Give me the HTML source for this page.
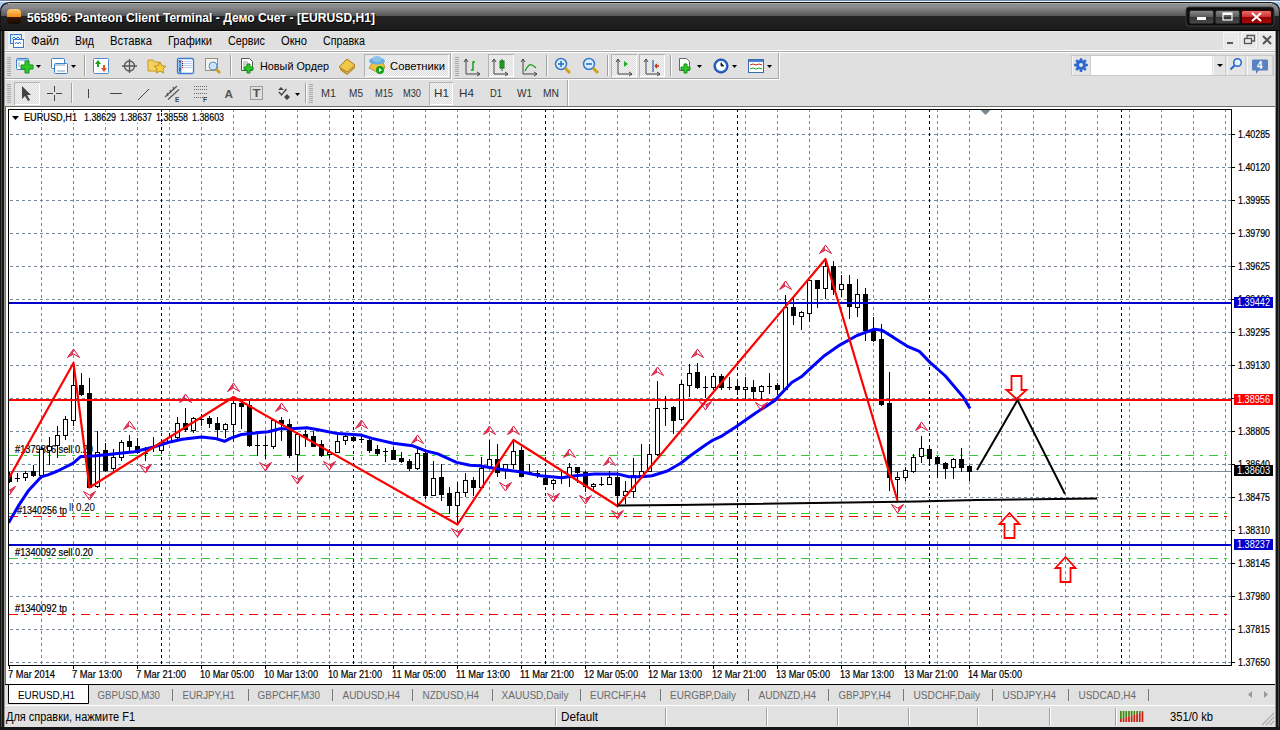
<!DOCTYPE html><html><head><meta charset="utf-8"><style>html,body{margin:0;padding:0;width:1280px;height:730px;overflow:hidden;background:#fff}svg{display:block}</style></head><body><svg width="1280" height="730" viewBox="0 0 1280 730" font-family="Liberation Sans"><rect x="0" y="0" width="1280" height="730" fill="#a8c8ec" /><rect x="0" y="0" width="1280" height="1" fill="#7088a8" /><rect x="0" y="1" width="1280" height="1" fill="#f0f4fa" /><path d="M0,12 Q0,2 10,2 L1270,2 Q1280,2 1280,12 L1280,730 L0,730 Z" fill="#161616"/><defs><linearGradient id="tg" x1="0" y1="0" x2="0" y2="1"><stop offset="0" stop-color="#8e8f92"/><stop offset="0.15" stop-color="#8a8b8e"/><stop offset="0.48" stop-color="#575757"/><stop offset="0.5" stop-color="#232324"/><stop offset="1" stop-color="#1b1b1c"/></linearGradient><linearGradient id="wbg" x1="0" y1="0" x2="0" y2="1"><stop offset="0" stop-color="#8a8a8a"/><stop offset="0.5" stop-color="#5a5a5a"/><stop offset="0.52" stop-color="#363636"/><stop offset="1" stop-color="#4a4a4a"/></linearGradient><linearGradient id="wbr" x1="0" y1="0" x2="0" y2="1"><stop offset="0" stop-color="#f07070"/><stop offset="0.5" stop-color="#c83030"/><stop offset="0.52" stop-color="#900000"/><stop offset="1" stop-color="#a80808"/></linearGradient><linearGradient id="ico" x1="0" y1="0" x2="0" y2="1"><stop offset="0" stop-color="#ffc870"/><stop offset="0.55" stop-color="#f08a10"/><stop offset="0.56" stop-color="#3a1800"/><stop offset="1" stop-color="#120800"/></linearGradient><pattern id="chk" width="2" height="2" patternUnits="userSpaceOnUse"><rect width="2" height="2" fill="#f4f4f4"/><rect width="1" height="1" fill="#dcdcdc"/><rect x="1" y="1" width="1" height="1" fill="#dcdcdc"/></pattern><clipPath id="cc"><rect x="9" y="110" width="1222" height="555"/></clipPath></defs><path d="M1,13 Q1,3 11,3 L1269,3 Q1279,3 1279,13 L1279,30 L1,30 Z" fill="url(#tg)"/><rect x="8" y="3" width="1264" height="1" fill="#a8a8a8" /><rect x="7" y="9" width="14" height="15" rx="4" fill="url(#ico)"/><text x="28" y="22.5" font-size="13.5" fill="#000" textLength="348" lengthAdjust="spacingAndGlyphs" font-weight="bold" >565896: Panteon Client Terminal - Демо Счет - [EURUSD,H1]</text><text x="27" y="21.5" font-size="13.5" fill="#fff" textLength="348" lengthAdjust="spacingAndGlyphs" font-weight="bold" >565896: Panteon Client Terminal - Демо Счет - [EURUSD,H1]</text><rect x="1186" y="7" width="88" height="19" rx="3" fill="#0e0e0e" stroke="#3c3c3c"/><rect x="1189.5" y="10.5" width="24" height="13" rx="2" fill="url(#wbg)" stroke="#2a2a2a"/><rect x="1197" y="17" width="9" height="3" fill="#fff" /><rect x="1215.5" y="10.5" width="24" height="13" rx="2" fill="url(#wbg)" stroke="#2a2a2a"/><rect x="1223" y="13" width="9" height="7" fill="none" stroke="#fff" stroke-width="1.2"/><rect x="1223" y="13" width="9" height="2" fill="#fff" /><rect x="1241.5" y="10.5" width="30" height="13" rx="2" fill="url(#wbr)" stroke="#3a0000"/><path d="M1252,13 L1261,21 M1261,13 L1252,21" stroke="#fff" stroke-width="2"/><rect x="0" y="30" width="1280" height="1" fill="#000000" /><rect x="4" y="31" width="1272" height="19" fill="#e0e0e0" /><rect x="4" y="31" width="1272" height="1" fill="#ececec" /><rect x="4" y="50" width="1272" height="1" fill="#ffffff" /><rect x="4" y="51" width="1272" height="1" fill="#a8a8a8" /><rect x="4" y="52" width="1272" height="1" fill="#ffffff" /><rect x="8" y="32" width="17" height="17" fill="#f0f0f0"/><rect x="10.5" y="34.5" width="11" height="9" fill="#dfeefc" stroke="#3a78d8"/><path d="M12,39 l2,-2 2,2 2,-2 2,2" stroke="#3a78d8" fill="none"/><rect x="13.5" y="39.5" width="10" height="8" fill="#fff" stroke="#3a78d8"/><path d="M15,44 l1.5,-2 1.5,2 1.5,-2 1.5,2" stroke="#3a78d8" fill="none"/><text x="31" y="45" font-size="12" fill="#000" textLength="28" lengthAdjust="spacingAndGlyphs" >Файл</text><text x="75" y="45" font-size="12" fill="#000" textLength="19" lengthAdjust="spacingAndGlyphs" >Вид</text><text x="110" y="45" font-size="12" fill="#000" textLength="42" lengthAdjust="spacingAndGlyphs" >Вставка</text><text x="168" y="45" font-size="12" fill="#000" textLength="44" lengthAdjust="spacingAndGlyphs" >Графики</text><text x="228" y="45" font-size="12" fill="#000" textLength="37" lengthAdjust="spacingAndGlyphs" >Сервис</text><text x="281" y="45" font-size="12" fill="#000" textLength="26" lengthAdjust="spacingAndGlyphs" >Окно</text><text x="323" y="45" font-size="12" fill="#000" textLength="42" lengthAdjust="spacingAndGlyphs" >Справка</text><rect x="1223.5" y="32.5" width="15" height="16" fill="#e9e9e9" stroke="#f4f4f4"/><rect x="1241.5" y="32.5" width="15" height="16" fill="#e9e9e9" stroke="#f4f4f4"/><rect x="1259.5" y="32.5" width="15" height="16" fill="#e9e9e9" stroke="#f4f4f4"/><rect x="1227" y="42" width="6" height="2" fill="#555" /><rect x="1244.5" y="38.5" width="7" height="5" fill="none" stroke="#555" stroke-width="1.3"/><path d="M1247,38 V35.5 H1254.5 V41 H1252" fill="none" stroke="#555" stroke-width="1.3"/><path d="M1263,36 L1271,44 M1271,36 L1263,44" stroke="#555" stroke-width="2"/><rect x="4" y="53" width="1272" height="53" fill="#e0e0e0" /><rect x="4" y="78" width="447" height="1" fill="#a8a8a8" /><rect x="4" y="79" width="448" height="1" fill="#ffffff" /><rect x="450" y="53" width="1" height="26" fill="#a8a8a8" /><rect x="451" y="53" width="1" height="27" fill="#ffffff" /><rect x="454" y="78" width="325" height="1" fill="#a8a8a8" /><rect x="454" y="79" width="326" height="1" fill="#ffffff" /><rect x="778" y="53" width="1" height="26" fill="#a8a8a8" /><rect x="779" y="53" width="1" height="27" fill="#ffffff" /><rect x="567" y="80" width="1" height="26" fill="#a8a8a8" /><rect x="568" y="80" width="1" height="26" fill="#ffffff" /><rect x="7" y="57" width="4" height="1" fill="#a8a8a8" /><rect x="7" y="59" width="4" height="1" fill="#a8a8a8" /><rect x="7" y="61" width="4" height="1" fill="#a8a8a8" /><rect x="7" y="63" width="4" height="1" fill="#a8a8a8" /><rect x="7" y="65" width="4" height="1" fill="#a8a8a8" /><rect x="7" y="67" width="4" height="1" fill="#a8a8a8" /><rect x="7" y="69" width="4" height="1" fill="#a8a8a8" /><rect x="7" y="71" width="4" height="1" fill="#a8a8a8" /><rect x="7" y="73" width="4" height="1" fill="#a8a8a8" /><rect x="7" y="75" width="4" height="1" fill="#a8a8a8" /><rect x="7" y="84" width="4" height="1" fill="#a8a8a8" /><rect x="7" y="86" width="4" height="1" fill="#a8a8a8" /><rect x="7" y="88" width="4" height="1" fill="#a8a8a8" /><rect x="7" y="90" width="4" height="1" fill="#a8a8a8" /><rect x="7" y="92" width="4" height="1" fill="#a8a8a8" /><rect x="7" y="94" width="4" height="1" fill="#a8a8a8" /><rect x="7" y="96" width="4" height="1" fill="#a8a8a8" /><rect x="7" y="98" width="4" height="1" fill="#a8a8a8" /><rect x="7" y="100" width="4" height="1" fill="#a8a8a8" /><rect x="7" y="102" width="4" height="1" fill="#a8a8a8" /><rect x="455" y="57" width="4" height="1" fill="#a8a8a8" /><rect x="455" y="59" width="4" height="1" fill="#a8a8a8" /><rect x="455" y="61" width="4" height="1" fill="#a8a8a8" /><rect x="455" y="63" width="4" height="1" fill="#a8a8a8" /><rect x="455" y="65" width="4" height="1" fill="#a8a8a8" /><rect x="455" y="67" width="4" height="1" fill="#a8a8a8" /><rect x="455" y="69" width="4" height="1" fill="#a8a8a8" /><rect x="455" y="71" width="4" height="1" fill="#a8a8a8" /><rect x="455" y="73" width="4" height="1" fill="#a8a8a8" /><rect x="455" y="75" width="4" height="1" fill="#a8a8a8" /><rect x="309" y="84" width="4" height="1" fill="#a8a8a8" /><rect x="309" y="86" width="4" height="1" fill="#a8a8a8" /><rect x="309" y="88" width="4" height="1" fill="#a8a8a8" /><rect x="309" y="90" width="4" height="1" fill="#a8a8a8" /><rect x="309" y="92" width="4" height="1" fill="#a8a8a8" /><rect x="309" y="94" width="4" height="1" fill="#a8a8a8" /><rect x="309" y="96" width="4" height="1" fill="#a8a8a8" /><rect x="309" y="98" width="4" height="1" fill="#a8a8a8" /><rect x="309" y="100" width="4" height="1" fill="#a8a8a8" /><rect x="309" y="102" width="4" height="1" fill="#a8a8a8" /><rect x="16.5" y="58.5" width="12" height="11" rx="1" fill="#fff" stroke="#3f7fc8"/><rect x="17" y="59" width="11" height="2" fill="#9cc4f0"/><path d="M19,62 v5" stroke="#8aa" stroke-width="1"/><path d="M25,61 h4 v4 h4 v4 h-4 v4 h-4 v-4 h-4 v-4 h4 z" fill="#2cc82c" stroke="#139013"/><path d="M36,65 h5 l-2.5,3 z" fill="#000"/><rect x="51.5" y="58.5" width="13" height="10" rx="1" fill="#fff" stroke="#3f7fc8"/><rect x="54.5" y="63.5" width="13" height="10" rx="1" fill="#fff" stroke="#3f7fc8"/><path d="M55,65 h10 M57,71 h8" stroke="#7aa0c8"/><path d="M71,65 h5 l-2.5,3 z" fill="#000"/><rect x="84" y="55" width="1" height="21" fill="#a0a0a0" /><rect x="85" y="55" width="1" height="21" fill="#fafafa" /><rect x="93.5" y="58.5" width="15" height="15" rx="1" fill="#fff" stroke="#4a8ad8"/><path d="M98,60 l-3,4 h2 v3 h2 v-3 h2 z" fill="#1ca01c"/><path d="M104,72 l3,-4 h-2 v-3 h-2 v3 h-2 z" fill="#e85020"/><circle cx="129.5" cy="66" r="5" fill="none" stroke="#555" stroke-width="1.3"/><path d="M129.5,59 v14 M122,66 h15" stroke="#555" stroke-width="1.3"/><path d="M148,60 h5 l2,2 h4 v9 h-11 z" fill="#f4d060" stroke="#c89a20"/><path d="M160,62 l1.8,3.6 4,.6 -2.9,2.8 .7,4 -3.6,-1.9 -3.6,1.9 .7,-4 -2.9,-2.8 4,-.6 z" fill="#f4d040" stroke="#b08010" stroke-width="0.8"/><rect x="177.5" y="58.5" width="16" height="15" rx="1.5" fill="#fff" stroke="#3a7ad0" stroke-width="1.3"/><rect x="178.5" y="60" width="3" height="13" fill="#5a9ae0"/><rect x="179.5" y="61" width="1" height="1" fill="#000"/><rect x="179.5" y="68" width="1" height="3" fill="#333"/><path d="M184,61.5 h8 M184,63.5 h8 M184,65.5 h8 M184,67.5 h8" stroke="#a8c4f8" stroke-width="0.8"/><rect x="182" y="61" width="1.2" height="1.2" fill="#e02020"/><rect x="182" y="63" width="1.2" height="1.2" fill="#222"/><rect x="182" y="65" width="1.2" height="1.2" fill="#222"/><rect x="182" y="67" width="1.2" height="1.2" fill="#e02020"/><rect x="205.5" y="58.5" width="12" height="12" fill="#f4f4f4" stroke="#a09070"/><circle cx="213" cy="66" r="4" fill="#cfe4f4" stroke="#5a90c8"/><path d="M216,69 l4,4" stroke="#c8a020" stroke-width="2.5"/><rect x="230" y="55" width="1" height="21" fill="#a0a0a0" /><rect x="231" y="55" width="1" height="21" fill="#fafafa" /><path d="M241.5,58.5 h8 l3,3 v9 h-11 z" fill="#fff" stroke="#555"/><path d="M243,62 h5 M243,64 h6 M243,66 h4" stroke="#888" stroke-width="0.8"/><path d="M247,64 h3 v3 h3 v3 h-3 v3 h-3 v-3 h-3 v-3 h3 z" fill="#2cc82c" stroke="#139013"/><text x="260" y="70" font-size="11" fill="#000" textLength="69" lengthAdjust="spacingAndGlyphs" >Новый Ордер</text><path d="M339,67 l8,-8 l8,6 l-8,7 z" fill="#f0c848" stroke="#a87818"/><path d="M340,68 l7,5 l8,-7 v2 l-8,7 l-7,-5 z" fill="#c08a20"/><rect x="364.5" y="54.5" width="84" height="22" fill="url(#chk)" stroke="#b4b4b4"/><rect x="365" y="76" width="84" height="1" fill="#fff" /><rect x="448" y="55" width="1" height="22" fill="#fff" /><path d="M369,68 l4,-6 h10 l2,6 l-6,5 z" fill="#f0c040" stroke="#b08a20" stroke-width="0.8"/><ellipse cx="377" cy="61" rx="8" ry="3.5" fill="#6aaee0"/><ellipse cx="377" cy="59" rx="4.5" ry="3" fill="#8cc4ec"/><circle cx="380" cy="70" r="4" fill="#18a018"/><path d="M379,68 l3,2 -3,2 z" fill="#fff"/><text x="390" y="70" font-size="11" fill="#000" textLength="55" lengthAdjust="spacingAndGlyphs" >Советники</text><path d="M466,59 v15 h14 M466,59 l-2,3 M466,59 l2,3 M480,74 l-3,-2 M480,74 l-3,2" fill="none" stroke="#444" stroke-width="1"/><path d="M471,70 h2 v-8 h2" stroke="#18a018" stroke-width="1.5" fill="none"/><rect x="488.5" y="54.5" width="25" height="22" fill="url(#chk)" stroke="#b4b4b4"/><rect x="489" y="76" width="25" height="1" fill="#fff" /><rect x="513" y="55" width="1" height="22" fill="#fff" /><path d="M494,59 v15 h14 M494,59 l-2,3 M494,59 l2,3 M508,74 l-3,-2 M508,74 l-3,2" fill="none" stroke="#444" stroke-width="1"/><rect x="500" y="61" width="4" height="7" fill="#30c030" stroke="#107010"/><path d="M502,59 v12" stroke="#107010"/><path d="M523,59 v15 h14 M523,59 l-2,3 M523,59 l2,3 M537,74 l-3,-2 M537,74 l-3,2" fill="none" stroke="#444" stroke-width="1"/><path d="M525,71 q4,-8 7,-6 q2,1 4,3" stroke="#18a018" stroke-width="1.3" fill="none"/><rect x="546" y="55" width="1" height="21" fill="#a0a0a0" /><rect x="547" y="55" width="1" height="21" fill="#fafafa" /><circle cx="561" cy="64" r="5.5" fill="#d8ecfc" stroke="#3878c8" stroke-width="1.5"/><path d="M565,68 l5,5" stroke="#d0a020" stroke-width="3"/><path d="M558,64 h6" stroke="#3070c0" stroke-width="1.6"/><path d="M561,61 v6" stroke="#3070c0" stroke-width="1.6"/><circle cx="589" cy="64" r="5.5" fill="#d8ecfc" stroke="#3878c8" stroke-width="1.5"/><path d="M593,68 l5,5" stroke="#d0a020" stroke-width="3"/><path d="M586,64 h6" stroke="#3070c0" stroke-width="1.6"/><rect x="607" y="55" width="1" height="21" fill="#a0a0a0" /><rect x="608" y="55" width="1" height="21" fill="#fafafa" /><rect x="611.5" y="54.5" width="25" height="22" fill="url(#chk)" stroke="#b4b4b4"/><rect x="612" y="76" width="25" height="1" fill="#fff" /><rect x="636" y="55" width="1" height="22" fill="#fff" /><rect x="639.5" y="54.5" width="25" height="22" fill="url(#chk)" stroke="#b4b4b4"/><rect x="640" y="76" width="25" height="1" fill="#fff" /><rect x="664" y="55" width="1" height="22" fill="#fff" /><path d="M618,59 v15 h14 M618,59 l-2,3 M618,59 l2,3 M632,74 l-3,-2 M632,74 l-3,2" fill="none" stroke="#444" stroke-width="1"/><path d="M624,61 l4,3 -4,3 z" fill="#20b020"/><path d="M646,59 v15 h14 M646,59 l-2,3 M646,59 l2,3 M660,74 l-3,-2 M660,74 l-3,2" fill="none" stroke="#444" stroke-width="1"/><path d="M653,60 v12" stroke="#3a6ab0" stroke-width="1.3"/><path d="M659,66 h-4 M655,66 l2,-2 M655,66 l2,2" stroke="#c03010" stroke-width="1.3"/><rect x="670" y="55" width="1" height="21" fill="#a0a0a0" /><rect x="671" y="55" width="1" height="21" fill="#fafafa" /><path d="M679.5,58.5 h7 l3,3 v9 h-10 z" fill="#fff" stroke="#666"/><path d="M684,64 h3 v3 h3 v3 h-3 v3 h-3 v-3 h-3 v-3 h3 z" fill="#2cc82c" stroke="#139013"/><path d="M697,65 h5 l-2.5,3 z" fill="#000"/><circle cx="721" cy="66" r="7" fill="#2a6ad0" stroke="#1040a0"/><circle cx="721" cy="66" r="5" fill="#fff"/><path d="M721,62.5 v3.5 h3" stroke="#333" stroke-width="1"/><path d="M732,65 h5 l-2.5,3 z" fill="#000"/><rect x="748.5" y="59.5" width="15" height="13" fill="#fff" stroke="#3a6ab0"/><rect x="749" y="60" width="14" height="2" fill="#4a80d0"/><path d="M750,65 l3,-1 3,1 3,-1 3,1" stroke="#c03020" fill="none"/><path d="M750,69 l3,-1 3,1 3,-1 3,1" stroke="#20a020" fill="none"/><path d="M767,65 h5 l-2.5,3 z" fill="#000"/><rect x="1071.5" y="55.5" width="202" height="20" fill="#e2e2e2" stroke="#c8c8c8"/><rect x="1072" y="56" width="19" height="19" fill="#e4e4e4"/><rect x="1072" y="56" width="1" height="19" fill="#f6f6f6" /><rect x="1090" y="56" width="1" height="19" fill="#cfcfcf" /><rect x="1213" y="56" width="13" height="19" fill="#e4e4e4"/><rect x="1213" y="56" width="1" height="19" fill="#f6f6f6" /><rect x="1225" y="56" width="1" height="19" fill="#cfcfcf" /><rect x="1227" y="56" width="19" height="19" fill="#e4e4e4"/><rect x="1227" y="56" width="1" height="19" fill="#f6f6f6" /><rect x="1245" y="56" width="1" height="19" fill="#cfcfcf" /><rect x="1247" y="56" width="26" height="19" fill="#e4e4e4"/><rect x="1247" y="56" width="1" height="19" fill="#f6f6f6" /><rect x="1272" y="56" width="1" height="19" fill="#cfcfcf" /><circle cx="1081" cy="65" r="5" fill="#2a68d0"/><circle cx="1081" cy="65" r="2" fill="#e4e4e4"/><circle cx="1086.5" cy="65.0" r="1.5" fill="#2a68d0"/><circle cx="1084.9" cy="68.9" r="1.5" fill="#2a68d0"/><circle cx="1081.0" cy="70.5" r="1.5" fill="#2a68d0"/><circle cx="1077.1" cy="68.9" r="1.5" fill="#2a68d0"/><circle cx="1075.5" cy="65.0" r="1.5" fill="#2a68d0"/><circle cx="1077.1" cy="61.1" r="1.5" fill="#2a68d0"/><circle cx="1081.0" cy="59.5" r="1.5" fill="#2a68d0"/><circle cx="1084.9" cy="61.1" r="1.5" fill="#2a68d0"/><rect x="1091" y="56" width="121" height="19" fill="#ffffff" /><path d="M1217,64 h6 l-3,3 z" fill="#000"/><circle cx="1237.5" cy="62.5" r="3.8" fill="#e8f2fc" stroke="#2a68d0" stroke-width="1.6"/><path d="M1234.5,65.5 l-4,4" stroke="#2a68d0" stroke-width="2"/><rect x="1252" y="59.5" width="16" height="11" rx="1" fill="#5a82c0"/><path d="M1256,70 v4 l3,-4 z" fill="#5a82c0"/><text x="1257" y="68.5" font-size="10" fill="#fff" font-weight="bold" >4</text><rect x="14.5" y="82.5" width="25" height="22" fill="url(#chk)" stroke="#b4b4b4"/><rect x="15" y="104" width="25" height="1" fill="#fff" /><rect x="39" y="83" width="1" height="22" fill="#fff" /><path d="M22,86 v13 l3,-3 l3,5 l2,-1 l-3,-5 h4 z" fill="#444"/><path d="M54.5,86 v6 M54.5,95 v6 M47,93.5 h6 M56,93.5 h6" stroke="#444"/><rect x="71" y="83" width="1" height="20" fill="#a0a0a0" /><rect x="72" y="83" width="1" height="20" fill="#fafafa" /><rect x="88" y="89" width="1" height="9" fill="#444" /><rect x="110" y="93" width="12" height="1" fill="#444" /><path d="M138,100 l11,-11" stroke="#444"/><path d="M165,97 l12,-11 M168,99.5 l11,-10 M167,93 l1,3 M170,90 l1,3 M173,87 l1,3" stroke="#555" stroke-width="1.2"/><text x="175" y="102" font-size="6.5" fill="#444" font-weight="bold" >E</text><path d="M194,86.5 h13" stroke="#666" stroke-dasharray="1 1"/><path d="M194,89.5 h13" stroke="#666" stroke-dasharray="1 1"/><path d="M194,93.5 h13" stroke="#666" stroke-dasharray="1 1"/><path d="M194,97.5 h13" stroke="#666" stroke-dasharray="1 1"/><text x="203" y="102" font-size="6.5" fill="#444" font-weight="bold" >F</text><text x="224.5" y="97.5" font-size="11" fill="#555" textLength="8.5" lengthAdjust="spacingAndGlyphs" font-weight="bold" >A</text><rect x="250.5" y="86.5" width="12" height="13" fill="none" stroke="#555" stroke-dasharray="1 1"/><text x="252.5" y="97" font-size="10" fill="#555" textLength="8" lengthAdjust="spacingAndGlyphs" font-weight="bold" >T</text><path d="M278,90 l3,-3 l3,3 z M284,97 l3,-3 l3,3 l-3,3 z" fill="#444"/><path d="M279,92 l2.5,3 l5,-6" stroke="#444" stroke-width="1.4" fill="none"/><path d="M295,93 h5 l-2.5,3 z" fill="#000"/><rect x="305" y="83" width="1" height="20" fill="#a0a0a0" /><rect x="306" y="83" width="1" height="20" fill="#fafafa" /><text x="321" y="97" font-size="10.5" fill="#333" textLength="15" lengthAdjust="spacingAndGlyphs" >M1</text><text x="349" y="97" font-size="10.5" fill="#333" textLength="14" lengthAdjust="spacingAndGlyphs" >M5</text><text x="375" y="97" font-size="10.5" fill="#333" textLength="18" lengthAdjust="spacingAndGlyphs" >M15</text><text x="403" y="97" font-size="10.5" fill="#333" textLength="18" lengthAdjust="spacingAndGlyphs" >M30</text><text x="459" y="97" font-size="10.5" fill="#333" textLength="15" lengthAdjust="spacingAndGlyphs" >H4</text><text x="490" y="97" font-size="10.5" fill="#333" textLength="12" lengthAdjust="spacingAndGlyphs" >D1</text><text x="517" y="97" font-size="10.5" fill="#333" textLength="15" lengthAdjust="spacingAndGlyphs" >W1</text><text x="543" y="97" font-size="10.5" fill="#333" textLength="16" lengthAdjust="spacingAndGlyphs" >MN</text><rect x="429.5" y="82.5" width="23" height="22" fill="url(#chk)" stroke="#b4b4b4"/><rect x="430" y="104" width="23" height="1" fill="#fff" /><rect x="452" y="83" width="1" height="22" fill="#fff" /><text x="434" y="97" font-size="10.5" fill="#333" textLength="15" lengthAdjust="spacingAndGlyphs" >H1</text><rect x="5" y="106" width="1271" height="578" fill="#ffffff" /><rect x="5" y="106" width="1270" height="1" fill="#716f64" /><rect x="5" y="106" width="1" height="578" fill="#716f64" /><rect x="8" y="109" width="1224" height="1" fill="#000" /><rect x="8" y="109" width="1" height="557" fill="#000" /><rect x="1231" y="109" width="1" height="557" fill="#000" /><rect x="8" y="665" width="1224" height="1" fill="#000" /><g clip-path="url(#cc)" shape-rendering="crispEdges"><path d="M4,134.5 H1231" stroke="#778899" stroke-dasharray="3 3"/><path d="M4,167.5 H1231" stroke="#778899" stroke-dasharray="3 3"/><path d="M4,200.5 H1231" stroke="#778899" stroke-dasharray="3 3"/><path d="M4,233.5 H1231" stroke="#778899" stroke-dasharray="3 3"/><path d="M4,266.5 H1231" stroke="#778899" stroke-dasharray="3 3"/><path d="M4,299.5 H1231" stroke="#778899" stroke-dasharray="3 3"/><path d="M4,332.5 H1231" stroke="#778899" stroke-dasharray="3 3"/><path d="M4,365.5 H1231" stroke="#778899" stroke-dasharray="3 3"/><path d="M4,398.5 H1231" stroke="#778899" stroke-dasharray="3 3"/><path d="M4,431.5 H1231" stroke="#778899" stroke-dasharray="3 3"/><path d="M4,464.5 H1231" stroke="#778899" stroke-dasharray="3 3"/><path d="M4,497.5 H1231" stroke="#778899" stroke-dasharray="3 3"/><path d="M4,530.5 H1231" stroke="#778899" stroke-dasharray="3 3"/><path d="M4,563.5 H1231" stroke="#778899" stroke-dasharray="3 3"/><path d="M4,596.5 H1231" stroke="#778899" stroke-dasharray="3 3"/><path d="M4,629.5 H1231" stroke="#778899" stroke-dasharray="3 3"/><path d="M4,662.5 H1231" stroke="#778899" stroke-dasharray="3 3"/><path d="M41.5,109 V665" stroke="#778899" stroke-dasharray="3 3"/><path d="M73.5,109 V665" stroke="#778899" stroke-dasharray="3 3"/><path d="M105.5,109 V665" stroke="#778899" stroke-dasharray="3 3"/><path d="M137.5,109 V665" stroke="#778899" stroke-dasharray="3 3"/><path d="M169.5,109 V665" stroke="#778899" stroke-dasharray="3 3"/><path d="M201.5,109 V665" stroke="#778899" stroke-dasharray="3 3"/><path d="M233.5,109 V665" stroke="#778899" stroke-dasharray="3 3"/><path d="M265.5,109 V665" stroke="#778899" stroke-dasharray="3 3"/><path d="M297.5,109 V665" stroke="#778899" stroke-dasharray="3 3"/><path d="M329.5,109 V665" stroke="#778899" stroke-dasharray="3 3"/><path d="M361.5,109 V665" stroke="#778899" stroke-dasharray="3 3"/><path d="M393.5,109 V665" stroke="#778899" stroke-dasharray="3 3"/><path d="M425.5,109 V665" stroke="#778899" stroke-dasharray="3 3"/><path d="M457.5,109 V665" stroke="#778899" stroke-dasharray="3 3"/><path d="M489.5,109 V665" stroke="#778899" stroke-dasharray="3 3"/><path d="M521.5,109 V665" stroke="#778899" stroke-dasharray="3 3"/><path d="M553.5,109 V665" stroke="#778899" stroke-dasharray="3 3"/><path d="M585.5,109 V665" stroke="#778899" stroke-dasharray="3 3"/><path d="M617.5,109 V665" stroke="#778899" stroke-dasharray="3 3"/><path d="M649.5,109 V665" stroke="#778899" stroke-dasharray="3 3"/><path d="M681.5,109 V665" stroke="#778899" stroke-dasharray="3 3"/><path d="M713.5,109 V665" stroke="#778899" stroke-dasharray="3 3"/><path d="M745.5,109 V665" stroke="#778899" stroke-dasharray="3 3"/><path d="M777.5,109 V665" stroke="#778899" stroke-dasharray="3 3"/><path d="M809.5,109 V665" stroke="#778899" stroke-dasharray="3 3"/><path d="M841.5,109 V665" stroke="#778899" stroke-dasharray="3 3"/><path d="M873.5,109 V665" stroke="#778899" stroke-dasharray="3 3"/><path d="M905.5,109 V665" stroke="#778899" stroke-dasharray="3 3"/><path d="M937.5,109 V665" stroke="#778899" stroke-dasharray="3 3"/><path d="M969.5,109 V665" stroke="#778899" stroke-dasharray="3 3"/><path d="M1001.5,109 V665" stroke="#778899" stroke-dasharray="3 3"/><path d="M1033.5,109 V665" stroke="#778899" stroke-dasharray="3 3"/><path d="M1065.5,109 V665" stroke="#778899" stroke-dasharray="3 3"/><path d="M1097.5,109 V665" stroke="#778899" stroke-dasharray="3 3"/><path d="M1129.5,109 V665" stroke="#778899" stroke-dasharray="3 3"/><path d="M1161.5,109 V665" stroke="#778899" stroke-dasharray="3 3"/><path d="M1193.5,109 V665" stroke="#778899" stroke-dasharray="3 3"/><path d="M1225.5,109 V665" stroke="#778899" stroke-dasharray="3 3"/><path d="M161.5,109 V665" stroke="#000" stroke-dasharray="3 3"/><path d="M353.5,109 V665" stroke="#000" stroke-dasharray="3 3"/><path d="M545.5,109 V665" stroke="#000" stroke-dasharray="3 3"/><path d="M737.5,109 V665" stroke="#000" stroke-dasharray="3 3"/><path d="M929.5,109 V665" stroke="#000" stroke-dasharray="3 3"/><path d="M1121.5,109 V665" stroke="#000" stroke-dasharray="3 3"/><path d="M9,455.5 H1227" stroke="#32cd32" stroke-dasharray="9 6 3 6"/><path d="M9,513.5 H1227" stroke="#32cd32" stroke-dasharray="9 6 3 6"/><path d="M9,558.5 H1227" stroke="#32cd32" stroke-dasharray="9 6 3 6"/><path d="M9,516.5 H1227" stroke="#ff0000" stroke-dasharray="9 6 3 6"/><path d="M9,614.5 H1227" stroke="#ff0000" stroke-dasharray="9 6 3 6"/></g><text x="15" y="453" font-size="10" fill="#000" textLength="78" lengthAdjust="spacingAndGlyphs" stroke="#000" stroke-width="0.2">#1379896 sell 0.20</text><text x="15" y="556" font-size="10" fill="#000" textLength="78" lengthAdjust="spacingAndGlyphs" stroke="#000" stroke-width="0.2">#1340092 sell 0.20</text><text x="15" y="612" font-size="10" fill="#000" textLength="52" lengthAdjust="spacingAndGlyphs" stroke="#000" stroke-width="0.2">#1340092 tp</text><rect x="15" y="503" width="54" height="11" fill="#fff" /><text x="17" y="513.5" font-size="10" fill="#000" textLength="50" lengthAdjust="spacingAndGlyphs" stroke="#000" stroke-width="0.2">#1340256 tp</text><text x="69" y="510.5" font-size="10" fill="#000" textLength="26" lengthAdjust="spacingAndGlyphs" >ll 0.20</text><rect x="9" y="471" width="1222" height="1" fill="#778899" /><g clip-path="url(#cc)" shape-rendering="crispEdges"><rect x="9" y="472" width="1" height="11" fill="#000" /><rect x="7" y="474" width="5" height="8" fill="#000" /><rect x="17" y="473" width="1" height="9" fill="#000" /><rect x="15" y="478" width="5" height="1" fill="#000" /><rect x="25" y="471" width="1" height="10" fill="#000" /><rect x="23" y="473" width="5" height="5" fill="#000" /><rect x="24" y="474" width="3" height="3" fill="#fff" /><rect x="33" y="465" width="1" height="12" fill="#000" /><rect x="31" y="471" width="5" height="5" fill="#000" /><rect x="41" y="447" width="1" height="32" fill="#000" /><rect x="39" y="449" width="5" height="27" fill="#000" /><rect x="40" y="450" width="3" height="25" fill="#fff" /><rect x="49" y="437" width="1" height="28" fill="#000" /><rect x="47" y="446" width="5" height="5" fill="#000" /><rect x="48" y="447" width="3" height="3" fill="#fff" /><rect x="57" y="426" width="1" height="32" fill="#000" /><rect x="55" y="435" width="5" height="11" fill="#000" /><rect x="56" y="436" width="3" height="9" fill="#fff" /><rect x="65" y="416" width="1" height="24" fill="#000" /><rect x="63" y="419" width="5" height="17" fill="#000" /><rect x="64" y="420" width="3" height="15" fill="#fff" /><rect x="73" y="363" width="1" height="63" fill="#000" /><rect x="71" y="385" width="5" height="36" fill="#000" /><rect x="72" y="386" width="3" height="34" fill="#fff" /><rect x="81" y="373" width="1" height="23" fill="#000" /><rect x="79" y="385" width="5" height="10" fill="#000" /><rect x="89" y="378" width="1" height="110" fill="#000" /><rect x="87" y="393" width="5" height="95" fill="#000" /><rect x="97" y="431" width="1" height="57" fill="#000" /><rect x="95" y="452" width="5" height="35" fill="#000" /><rect x="96" y="453" width="3" height="33" fill="#fff" /><rect x="105" y="443" width="1" height="29" fill="#000" /><rect x="103" y="450" width="5" height="21" fill="#000" /><rect x="113" y="449" width="1" height="22" fill="#000" /><rect x="111" y="457" width="5" height="12" fill="#000" /><rect x="112" y="458" width="3" height="10" fill="#fff" /><rect x="121" y="440" width="1" height="21" fill="#000" /><rect x="119" y="442" width="5" height="16" fill="#000" /><rect x="120" y="443" width="3" height="14" fill="#fff" /><rect x="129" y="435" width="1" height="17" fill="#000" /><rect x="127" y="441" width="5" height="6" fill="#000" /><rect x="137" y="438" width="1" height="16" fill="#000" /><rect x="135" y="446" width="5" height="7" fill="#000" /><rect x="145" y="447" width="1" height="14" fill="#000" /><rect x="143" y="453" width="5" height="1" fill="#000" /><rect x="153" y="437" width="1" height="15" fill="#000" /><rect x="151" y="446" width="5" height="1" fill="#000" /><rect x="161" y="440" width="1" height="11" fill="#000" /><rect x="159" y="442" width="5" height="9" fill="#000" /><rect x="160" y="443" width="3" height="7" fill="#fff" /><rect x="169" y="433" width="1" height="9" fill="#000" /><rect x="167" y="437" width="5" height="5" fill="#000" /><rect x="168" y="438" width="3" height="3" fill="#fff" /><rect x="177" y="417" width="1" height="22" fill="#000" /><rect x="175" y="423" width="5" height="15" fill="#000" /><rect x="176" y="424" width="3" height="13" fill="#fff" /><rect x="185" y="408" width="1" height="24" fill="#000" /><rect x="183" y="423" width="5" height="7" fill="#000" /><rect x="193" y="417" width="1" height="16" fill="#000" /><rect x="191" y="418" width="5" height="13" fill="#000" /><rect x="192" y="419" width="3" height="11" fill="#fff" /><rect x="201" y="414" width="1" height="12" fill="#000" /><rect x="199" y="419" width="5" height="1" fill="#000" /><rect x="209" y="416" width="1" height="12" fill="#000" /><rect x="207" y="418" width="5" height="6" fill="#000" /><rect x="217" y="417" width="1" height="21" fill="#000" /><rect x="215" y="423" width="5" height="7" fill="#000" /><rect x="225" y="423" width="1" height="15" fill="#000" /><rect x="223" y="424" width="5" height="6" fill="#000" /><rect x="224" y="425" width="3" height="4" fill="#fff" /><rect x="233" y="397" width="1" height="45" fill="#000" /><rect x="231" y="403" width="5" height="22" fill="#000" /><rect x="232" y="404" width="3" height="20" fill="#fff" /><rect x="241" y="403" width="1" height="26" fill="#000" /><rect x="239" y="403" width="5" height="4" fill="#000" /><rect x="249" y="400" width="1" height="47" fill="#000" /><rect x="247" y="405" width="5" height="41" fill="#000" /><rect x="257" y="434" width="1" height="22" fill="#000" /><rect x="255" y="445" width="5" height="1" fill="#000" /><rect x="265" y="436" width="1" height="23" fill="#000" /><rect x="263" y="445" width="5" height="1" fill="#000" /><rect x="273" y="420" width="1" height="29" fill="#000" /><rect x="271" y="420" width="5" height="27" fill="#000" /><rect x="272" y="421" width="3" height="25" fill="#fff" /><rect x="281" y="417" width="1" height="24" fill="#000" /><rect x="279" y="420" width="5" height="4" fill="#000" /><rect x="289" y="419" width="1" height="39" fill="#000" /><rect x="287" y="424" width="5" height="32" fill="#000" /><rect x="297" y="432" width="1" height="40" fill="#000" /><rect x="295" y="434" width="5" height="21" fill="#000" /><rect x="296" y="435" width="3" height="19" fill="#fff" /><rect x="305" y="430" width="1" height="17" fill="#000" /><rect x="303" y="434" width="5" height="4" fill="#000" /><rect x="313" y="431" width="1" height="16" fill="#000" /><rect x="311" y="436" width="5" height="11" fill="#000" /><rect x="321" y="440" width="1" height="17" fill="#000" /><rect x="319" y="444" width="5" height="12" fill="#000" /><rect x="329" y="449" width="1" height="9" fill="#000" /><rect x="327" y="452" width="5" height="3" fill="#000" /><rect x="328" y="453" width="3" height="1" fill="#fff" /><rect x="337" y="435" width="1" height="18" fill="#000" /><rect x="335" y="441" width="5" height="12" fill="#000" /><rect x="336" y="442" width="3" height="10" fill="#fff" /><rect x="345" y="433" width="1" height="12" fill="#000" /><rect x="343" y="436" width="5" height="5" fill="#000" /><rect x="344" y="437" width="3" height="3" fill="#fff" /><rect x="353" y="434" width="1" height="8" fill="#000" /><rect x="351" y="437" width="5" height="4" fill="#000" /><rect x="361" y="434" width="1" height="9" fill="#000" /><rect x="359" y="439" width="5" height="1" fill="#000" /><rect x="369" y="438" width="1" height="15" fill="#000" /><rect x="367" y="440" width="5" height="11" fill="#000" /><rect x="377" y="445" width="1" height="11" fill="#000" /><rect x="375" y="449" width="5" height="5" fill="#000" /><rect x="385" y="448" width="1" height="14" fill="#000" /><rect x="383" y="451" width="5" height="1" fill="#000" /><rect x="393" y="447" width="1" height="13" fill="#000" /><rect x="391" y="450" width="5" height="10" fill="#000" /><rect x="401" y="452" width="1" height="11" fill="#000" /><rect x="399" y="458" width="5" height="4" fill="#000" /><rect x="409" y="459" width="1" height="12" fill="#000" /><rect x="407" y="461" width="5" height="8" fill="#000" /><rect x="417" y="449" width="1" height="21" fill="#000" /><rect x="415" y="453" width="5" height="16" fill="#000" /><rect x="416" y="454" width="3" height="14" fill="#fff" /><rect x="425" y="449" width="1" height="50" fill="#000" /><rect x="423" y="453" width="5" height="43" fill="#000" /><rect x="433" y="461" width="1" height="35" fill="#000" /><rect x="431" y="478" width="5" height="18" fill="#000" /><rect x="432" y="479" width="3" height="16" fill="#fff" /><rect x="441" y="464" width="1" height="37" fill="#000" /><rect x="439" y="477" width="5" height="18" fill="#000" /><rect x="449" y="487" width="1" height="27" fill="#000" /><rect x="447" y="493" width="5" height="13" fill="#000" /><rect x="457" y="482" width="1" height="43" fill="#000" /><rect x="455" y="492" width="5" height="14" fill="#000" /><rect x="456" y="493" width="3" height="12" fill="#fff" /><rect x="465" y="473" width="1" height="24" fill="#000" /><rect x="463" y="480" width="5" height="13" fill="#000" /><rect x="464" y="481" width="3" height="11" fill="#fff" /><rect x="473" y="477" width="1" height="19" fill="#000" /><rect x="471" y="480" width="5" height="8" fill="#000" /><rect x="481" y="457" width="1" height="31" fill="#000" /><rect x="479" y="468" width="5" height="20" fill="#000" /><rect x="480" y="469" width="3" height="18" fill="#fff" /><rect x="489" y="440" width="1" height="27" fill="#000" /><rect x="487" y="459" width="5" height="8" fill="#000" /><rect x="488" y="460" width="3" height="6" fill="#fff" /><rect x="497" y="444" width="1" height="33" fill="#000" /><rect x="495" y="459" width="5" height="14" fill="#000" /><rect x="505" y="464" width="1" height="15" fill="#000" /><rect x="503" y="464" width="5" height="6" fill="#000" /><rect x="504" y="465" width="3" height="4" fill="#fff" /><rect x="513" y="440" width="1" height="29" fill="#000" /><rect x="511" y="451" width="5" height="14" fill="#000" /><rect x="512" y="452" width="3" height="12" fill="#fff" /><rect x="521" y="447" width="1" height="30" fill="#000" /><rect x="519" y="450" width="5" height="27" fill="#000" /><rect x="529" y="464" width="1" height="10" fill="#000" /><rect x="527" y="472" width="5" height="1" fill="#000" /><rect x="537" y="470" width="1" height="8" fill="#000" /><rect x="535" y="473" width="5" height="3" fill="#000" /><rect x="545" y="469" width="1" height="16" fill="#000" /><rect x="543" y="478" width="5" height="7" fill="#000" /><rect x="553" y="479" width="1" height="11" fill="#000" /><rect x="551" y="480" width="5" height="4" fill="#000" /><rect x="552" y="481" width="3" height="2" fill="#fff" /><rect x="561" y="472" width="1" height="12" fill="#000" /><rect x="559" y="478" width="5" height="1" fill="#000" /><rect x="569" y="463" width="1" height="24" fill="#000" /><rect x="567" y="467" width="5" height="10" fill="#000" /><rect x="568" y="468" width="3" height="8" fill="#fff" /><rect x="577" y="467" width="1" height="16" fill="#000" /><rect x="575" y="467" width="5" height="6" fill="#000" /><rect x="585" y="471" width="1" height="21" fill="#000" /><rect x="583" y="472" width="5" height="15" fill="#000" /><rect x="593" y="483" width="1" height="8" fill="#000" /><rect x="591" y="484" width="5" height="3" fill="#000" /><rect x="592" y="485" width="3" height="1" fill="#fff" /><rect x="601" y="477" width="1" height="9" fill="#000" /><rect x="599" y="484" width="5" height="1" fill="#000" /><rect x="609" y="471" width="1" height="14" fill="#000" /><rect x="607" y="477" width="5" height="8" fill="#000" /><rect x="608" y="478" width="3" height="6" fill="#fff" /><rect x="617" y="472" width="1" height="35" fill="#000" /><rect x="615" y="477" width="5" height="19" fill="#000" /><rect x="625" y="481" width="1" height="23" fill="#000" /><rect x="623" y="491" width="5" height="5" fill="#000" /><rect x="624" y="492" width="3" height="3" fill="#fff" /><rect x="633" y="458" width="1" height="40" fill="#000" /><rect x="631" y="475" width="5" height="17" fill="#000" /><rect x="632" y="476" width="3" height="15" fill="#fff" /><rect x="641" y="444" width="1" height="32" fill="#000" /><rect x="639" y="471" width="5" height="5" fill="#000" /><rect x="640" y="472" width="3" height="3" fill="#fff" /><rect x="649" y="444" width="1" height="28" fill="#000" /><rect x="647" y="454" width="5" height="18" fill="#000" /><rect x="648" y="455" width="3" height="16" fill="#fff" /><rect x="657" y="381" width="1" height="75" fill="#000" /><rect x="655" y="408" width="5" height="47" fill="#000" /><rect x="656" y="409" width="3" height="45" fill="#fff" /><rect x="665" y="396" width="1" height="30" fill="#000" /><rect x="663" y="408" width="5" height="1" fill="#000" /><rect x="673" y="406" width="1" height="28" fill="#000" /><rect x="671" y="407" width="5" height="14" fill="#000" /><rect x="681" y="380" width="1" height="41" fill="#000" /><rect x="679" y="384" width="5" height="36" fill="#000" /><rect x="680" y="385" width="3" height="34" fill="#fff" /><rect x="689" y="364" width="1" height="33" fill="#000" /><rect x="687" y="373" width="5" height="13" fill="#000" /><rect x="688" y="374" width="3" height="11" fill="#fff" /><rect x="697" y="363" width="1" height="26" fill="#000" /><rect x="695" y="372" width="5" height="16" fill="#000" /><rect x="705" y="376" width="1" height="22" fill="#000" /><rect x="703" y="387" width="5" height="1" fill="#000" /><rect x="713" y="373" width="1" height="17" fill="#000" /><rect x="711" y="376" width="5" height="12" fill="#000" /><rect x="712" y="377" width="3" height="10" fill="#fff" /><rect x="721" y="374" width="1" height="16" fill="#000" /><rect x="719" y="376" width="5" height="12" fill="#000" /><rect x="729" y="377" width="1" height="13" fill="#000" /><rect x="727" y="387" width="5" height="1" fill="#000" /><rect x="737" y="379" width="1" height="16" fill="#000" /><rect x="735" y="386" width="5" height="4" fill="#000" /><rect x="745" y="377" width="1" height="22" fill="#000" /><rect x="743" y="387" width="5" height="3" fill="#000" /><rect x="744" y="388" width="3" height="1" fill="#fff" /><rect x="753" y="380" width="1" height="19" fill="#000" /><rect x="751" y="387" width="5" height="5" fill="#000" /><rect x="761" y="385" width="1" height="14" fill="#000" /><rect x="759" y="386" width="5" height="6" fill="#000" /><rect x="760" y="387" width="3" height="4" fill="#fff" /><rect x="769" y="373" width="1" height="21" fill="#000" /><rect x="767" y="386" width="5" height="1" fill="#000" /><rect x="777" y="383" width="1" height="12" fill="#000" /><rect x="775" y="385" width="5" height="5" fill="#000" /><rect x="785" y="295" width="1" height="95" fill="#000" /><rect x="783" y="307" width="5" height="83" fill="#000" /><rect x="784" y="308" width="3" height="81" fill="#fff" /><rect x="793" y="298" width="1" height="27" fill="#000" /><rect x="791" y="307" width="5" height="9" fill="#000" /><rect x="801" y="311" width="1" height="19" fill="#000" /><rect x="799" y="312" width="5" height="5" fill="#000" /><rect x="800" y="313" width="3" height="3" fill="#fff" /><rect x="809" y="280" width="1" height="42" fill="#000" /><rect x="807" y="280" width="5" height="34" fill="#000" /><rect x="808" y="281" width="3" height="32" fill="#fff" /><rect x="817" y="280" width="1" height="28" fill="#000" /><rect x="815" y="280" width="5" height="9" fill="#000" /><rect x="825" y="259" width="1" height="40" fill="#000" /><rect x="823" y="266" width="5" height="23" fill="#000" /><rect x="824" y="267" width="3" height="21" fill="#fff" /><rect x="833" y="261" width="1" height="34" fill="#000" /><rect x="831" y="266" width="5" height="24" fill="#000" /><rect x="841" y="275" width="1" height="22" fill="#000" /><rect x="839" y="284" width="5" height="6" fill="#000" /><rect x="840" y="285" width="3" height="4" fill="#fff" /><rect x="849" y="275" width="1" height="44" fill="#000" /><rect x="847" y="284" width="5" height="23" fill="#000" /><rect x="857" y="279" width="1" height="38" fill="#000" /><rect x="855" y="294" width="5" height="14" fill="#000" /><rect x="856" y="295" width="3" height="12" fill="#fff" /><rect x="865" y="288" width="1" height="53" fill="#000" /><rect x="863" y="294" width="5" height="37" fill="#000" /><rect x="873" y="317" width="1" height="25" fill="#000" /><rect x="871" y="330" width="5" height="11" fill="#000" /><rect x="881" y="324" width="1" height="82" fill="#000" /><rect x="879" y="339" width="5" height="66" fill="#000" /><rect x="889" y="372" width="1" height="119" fill="#000" /><rect x="887" y="403" width="5" height="75" fill="#000" /><rect x="897" y="472" width="1" height="29" fill="#000" /><rect x="895" y="477" width="5" height="3" fill="#000" /><rect x="896" y="478" width="3" height="1" fill="#fff" /><rect x="905" y="467" width="1" height="14" fill="#000" /><rect x="903" y="470" width="5" height="8" fill="#000" /><rect x="904" y="471" width="3" height="6" fill="#fff" /><rect x="913" y="454" width="1" height="19" fill="#000" /><rect x="911" y="457" width="5" height="15" fill="#000" /><rect x="912" y="458" width="3" height="13" fill="#fff" /><rect x="921" y="436" width="1" height="27" fill="#000" /><rect x="919" y="448" width="5" height="9" fill="#000" /><rect x="920" y="449" width="3" height="7" fill="#fff" /><rect x="929" y="445" width="1" height="18" fill="#000" /><rect x="927" y="449" width="5" height="10" fill="#000" /><rect x="937" y="456" width="1" height="22" fill="#000" /><rect x="935" y="457" width="5" height="7" fill="#000" /><rect x="945" y="462" width="1" height="17" fill="#000" /><rect x="943" y="463" width="5" height="6" fill="#000" /><rect x="953" y="458" width="1" height="21" fill="#000" /><rect x="951" y="459" width="5" height="9" fill="#000" /><rect x="952" y="460" width="3" height="7" fill="#fff" /><rect x="961" y="448" width="1" height="24" fill="#000" /><rect x="959" y="459" width="5" height="9" fill="#000" /><rect x="969" y="465" width="1" height="16" fill="#000" /><rect x="967" y="466" width="5" height="6" fill="#000" /></g><rect x="9" y="302" width="1222" height="2" fill="#0000c8" /><rect x="9" y="399" width="1222" height="2" fill="#ff0000" /><rect x="9" y="544" width="1222" height="2" fill="#0000c8" /><g clip-path="url(#cc)"><polyline points="8.6,522.8 19.2,504.6 28.8,490.2 41.3,476.8 48,474.9 57.6,471 72.9,463.3 80.6,456.6 84.5,456.6 96,455.7 115.2,453.7 134.4,451.8 153.6,447 168.9,442.2 182.3,439.3 201.5,436.9 215,438.4 224.6,441.3 230.3,438.4 241.5,434.5 258.8,432.6 268.4,431.7 279.9,428.8 291.4,428.8 306.8,427.8 318.3,429.8 337.5,433.6 360.5,434.9 372,438.4 393.1,443.2 412.3,445.7 425.8,450.9 437.3,453.7 456.5,462.4 470,465.3 479.2,465.8 498.4,469.1 517.6,471.4 540.6,475.8 561.7,477.7 575.2,475.8 594.4,473.9 617.4,473.9 628.9,476.8 642.3,476.8 652,475.8 667.3,471 680.7,463.3 690.3,455.7 705.8,444.8 713,440.1 722.2,435.8 736,426.7 755.3,413.2 774.5,400.8 791.7,382.5 801.3,376.8 814.8,364.3 824.4,355.7 839.7,345.1 857,335.5 874.3,329.2 882,330.3 893.5,337.4 906.9,346.1 919.4,351.4 930,362.4 945.4,376 963.5,397.4 970,408.6" fill="none" stroke="#0000ff" stroke-width="3" stroke-linejoin="round"/><polyline points="-10,512 73.5,363 89.5,487.5 233.5,397 457.5,524.5 513.5,440 617.5,506 825.5,259 897.5,500.5" fill="none" stroke="#ff0000" stroke-width="2.2" stroke-linejoin="round"/><path d="M67.5,357.5 L73.5,349 L79.5,357.5 M67.5,357.5 L73.5,354 L79.5,357.5" fill="none" stroke="#dc143c" stroke-width="1"/><path d="M68.0,357 L73.0,350 L73.0,354 Z" fill="#dc143c" opacity="0.85"/><path d="M123.5,429.5 L129.5,421 L135.5,429.5 M123.5,429.5 L129.5,426 L135.5,429.5" fill="none" stroke="#dc143c" stroke-width="1"/><path d="M124.0,429 L129.0,422 L129.0,426 Z" fill="#dc143c" opacity="0.85"/><path d="M179.5,402.5 L185.5,394 L191.5,402.5 M179.5,402.5 L185.5,399 L191.5,402.5" fill="none" stroke="#dc143c" stroke-width="1"/><path d="M180.0,402 L185.0,395 L185.0,399 Z" fill="#dc143c" opacity="0.85"/><path d="M227.5,391.5 L233.5,383 L239.5,391.5 M227.5,391.5 L233.5,388 L239.5,391.5" fill="none" stroke="#dc143c" stroke-width="1"/><path d="M228.0,391 L233.0,384 L233.0,388 Z" fill="#dc143c" opacity="0.85"/><path d="M275.5,411.5 L281.5,403 L287.5,411.5 M275.5,411.5 L281.5,408 L287.5,411.5" fill="none" stroke="#dc143c" stroke-width="1"/><path d="M276.0,411 L281.0,404 L281.0,408 Z" fill="#dc143c" opacity="0.85"/><path d="M355.5,428.5 L361.5,420 L367.5,428.5 M355.5,428.5 L361.5,425 L367.5,428.5" fill="none" stroke="#dc143c" stroke-width="1"/><path d="M356.0,428 L361.0,421 L361.0,425 Z" fill="#dc143c" opacity="0.85"/><path d="M411.5,443.5 L417.5,435 L423.5,443.5 M411.5,443.5 L417.5,440 L423.5,443.5" fill="none" stroke="#dc143c" stroke-width="1"/><path d="M412.0,443 L417.0,436 L417.0,440 Z" fill="#dc143c" opacity="0.85"/><path d="M483.5,434.5 L489.5,426 L495.5,434.5 M483.5,434.5 L489.5,431 L495.5,434.5" fill="none" stroke="#dc143c" stroke-width="1"/><path d="M484.0,434 L489.0,427 L489.0,431 Z" fill="#dc143c" opacity="0.85"/><path d="M507.5,434.5 L513.5,426 L519.5,434.5 M507.5,434.5 L513.5,431 L519.5,434.5" fill="none" stroke="#dc143c" stroke-width="1"/><path d="M508.0,434 L513.0,427 L513.0,431 Z" fill="#dc143c" opacity="0.85"/><path d="M563.5,457.5 L569.5,449 L575.5,457.5 M563.5,457.5 L569.5,454 L575.5,457.5" fill="none" stroke="#dc143c" stroke-width="1"/><path d="M564.0,457 L569.0,450 L569.0,454 Z" fill="#dc143c" opacity="0.85"/><path d="M603.5,465.5 L609.5,457 L615.5,465.5 M603.5,465.5 L609.5,462 L615.5,465.5" fill="none" stroke="#dc143c" stroke-width="1"/><path d="M604.0,465 L609.0,458 L609.0,462 Z" fill="#dc143c" opacity="0.85"/><path d="M651.5,375.5 L657.5,367 L663.5,375.5 M651.5,375.5 L657.5,372 L663.5,375.5" fill="none" stroke="#dc143c" stroke-width="1"/><path d="M652.0,375 L657.0,368 L657.0,372 Z" fill="#dc143c" opacity="0.85"/><path d="M691.5,357.5 L697.5,349 L703.5,357.5 M691.5,357.5 L697.5,354 L703.5,357.5" fill="none" stroke="#dc143c" stroke-width="1"/><path d="M692.0,357 L697.0,350 L697.0,354 Z" fill="#dc143c" opacity="0.85"/><path d="M779.5,289.5 L785.5,281 L791.5,289.5 M779.5,289.5 L785.5,286 L791.5,289.5" fill="none" stroke="#dc143c" stroke-width="1"/><path d="M780.0,289 L785.0,282 L785.0,286 Z" fill="#dc143c" opacity="0.85"/><path d="M819.5,253.5 L825.5,245 L831.5,253.5 M819.5,253.5 L825.5,250 L831.5,253.5" fill="none" stroke="#dc143c" stroke-width="1"/><path d="M820.0,253 L825.0,246 L825.0,250 Z" fill="#dc143c" opacity="0.85"/><path d="M915.5,430.5 L921.5,422 L927.5,430.5 M915.5,430.5 L921.5,427 L927.5,430.5" fill="none" stroke="#dc143c" stroke-width="1"/><path d="M916.0,430 L921.0,423 L921.0,427 Z" fill="#dc143c" opacity="0.85"/><path d="M3.5,486.5 L9.5,495 L15.5,486.5 M3.5,486.5 L9.5,490 L15.5,486.5" fill="none" stroke="#dc143c" stroke-width="1"/><path d="M15.0,487 L10.0,494 L10.0,490 Z" fill="#dc143c" opacity="0.85"/><path d="M83.5,491.5 L89.5,500 L95.5,491.5 M83.5,491.5 L89.5,495 L95.5,491.5" fill="none" stroke="#dc143c" stroke-width="1"/><path d="M95.0,492 L90.0,499 L90.0,495 Z" fill="#dc143c" opacity="0.85"/><path d="M139.5,464.5 L145.5,473 L151.5,464.5 M139.5,464.5 L145.5,468 L151.5,464.5" fill="none" stroke="#dc143c" stroke-width="1"/><path d="M151.0,465 L146.0,472 L146.0,468 Z" fill="#dc143c" opacity="0.85"/><path d="M259.5,462.5 L265.5,471 L271.5,462.5 M259.5,462.5 L265.5,466 L271.5,462.5" fill="none" stroke="#dc143c" stroke-width="1"/><path d="M271.0,463 L266.0,470 L266.0,466 Z" fill="#dc143c" opacity="0.85"/><path d="M291.5,475.5 L297.5,484 L303.5,475.5 M291.5,475.5 L297.5,479 L303.5,475.5" fill="none" stroke="#dc143c" stroke-width="1"/><path d="M303.0,476 L298.0,483 L298.0,479 Z" fill="#dc143c" opacity="0.85"/><path d="M323.5,461.5 L329.5,470 L335.5,461.5 M323.5,461.5 L329.5,465 L335.5,461.5" fill="none" stroke="#dc143c" stroke-width="1"/><path d="M335.0,462 L330.0,469 L330.0,465 Z" fill="#dc143c" opacity="0.85"/><path d="M451.5,528.5 L457.5,537 L463.5,528.5 M451.5,528.5 L457.5,532 L463.5,528.5" fill="none" stroke="#dc143c" stroke-width="1"/><path d="M463.0,529 L458.0,536 L458.0,532 Z" fill="#dc143c" opacity="0.85"/><path d="M499.5,482.5 L505.5,491 L511.5,482.5 M499.5,482.5 L505.5,486 L511.5,482.5" fill="none" stroke="#dc143c" stroke-width="1"/><path d="M511.0,483 L506.0,490 L506.0,486 Z" fill="#dc143c" opacity="0.85"/><path d="M547.5,493.5 L553.5,502 L559.5,493.5 M547.5,493.5 L553.5,497 L559.5,493.5" fill="none" stroke="#dc143c" stroke-width="1"/><path d="M559.0,494 L554.0,501 L554.0,497 Z" fill="#dc143c" opacity="0.85"/><path d="M579.5,495.5 L585.5,504 L591.5,495.5 M579.5,495.5 L585.5,499 L591.5,495.5" fill="none" stroke="#dc143c" stroke-width="1"/><path d="M591.0,496 L586.0,503 L586.0,499 Z" fill="#dc143c" opacity="0.85"/><path d="M611.5,510.5 L617.5,519 L623.5,510.5 M611.5,510.5 L617.5,514 L623.5,510.5" fill="none" stroke="#dc143c" stroke-width="1"/><path d="M623.0,511 L618.0,518 L618.0,514 Z" fill="#dc143c" opacity="0.85"/><path d="M699.5,401.5 L705.5,410 L711.5,401.5 M699.5,401.5 L705.5,405 L711.5,401.5" fill="none" stroke="#dc143c" stroke-width="1"/><path d="M711.0,402 L706.0,409 L706.0,405 Z" fill="#dc143c" opacity="0.85"/><path d="M755.5,402.5 L761.5,411 L767.5,402.5 M755.5,402.5 L761.5,406 L767.5,402.5" fill="none" stroke="#dc143c" stroke-width="1"/><path d="M767.0,403 L762.0,410 L762.0,406 Z" fill="#dc143c" opacity="0.85"/><path d="M891.5,504.5 L897.5,513 L903.5,504.5 M891.5,504.5 L897.5,508 L903.5,504.5" fill="none" stroke="#dc143c" stroke-width="1"/><path d="M903.0,505 L898.0,512 L898.0,508 Z" fill="#dc143c" opacity="0.85"/><path d="M617,505.5 L677,505 L917,501.5 L977,500 L1097,498.5" stroke="#000" stroke-width="2" fill="none"/><path d="M977,470 L1017.5,400 L1065,494" stroke="#000" stroke-width="2" fill="none"/><path d="M1011.5,376 h10 v14 h5 L1016.5,399 L1006.5,390 h5 z" fill="none" stroke="#ff0000" stroke-width="1.8"/><path d="M1004.5,538 h10 v-14 h5 L1009.5,513 L999.5,524 h5 z" fill="none" stroke="#ff0000" stroke-width="1.8"/><path d="M1060.5,582 h10 v-14 h5 L1065.5,557 L1055.5,568 h5 z" fill="none" stroke="#ff0000" stroke-width="1.8"/></g><path d="M980.5,110 h10 l-5,5 z" fill="#778899"/><rect x="10" y="112" width="216" height="11" fill="#fff" /><path d="M161.5,113 V123" stroke="#000" stroke-dasharray="3 3" shape-rendering="crispEdges"/><path d="M12,116 h7 l-3.5,4 z" fill="#000"/><text x="24" y="121" font-size="10" fill="#000" textLength="53" lengthAdjust="spacingAndGlyphs" stroke="#000" stroke-width="0.2">EURUSD,H1</text><text x="84" y="121" font-size="10" fill="#000" textLength="32" lengthAdjust="spacingAndGlyphs" stroke="#000" stroke-width="0.2">1.38629</text><text x="120" y="121" font-size="10" fill="#000" textLength="32" lengthAdjust="spacingAndGlyphs" stroke="#000" stroke-width="0.2">1.38637</text><text x="156" y="121" font-size="10" fill="#000" textLength="32" lengthAdjust="spacingAndGlyphs" stroke="#000" stroke-width="0.2">1.38558</text><text x="192" y="121" font-size="10" fill="#000" textLength="32" lengthAdjust="spacingAndGlyphs" stroke="#000" stroke-width="0.2">1.38603</text><rect x="1232" y="134" width="3" height="1" fill="#000" /><rect x="1232" y="167" width="3" height="1" fill="#000" /><rect x="1232" y="200" width="3" height="1" fill="#000" /><rect x="1232" y="233" width="3" height="1" fill="#000" /><rect x="1232" y="266" width="3" height="1" fill="#000" /><rect x="1232" y="299" width="3" height="1" fill="#000" /><rect x="1232" y="332" width="3" height="1" fill="#000" /><rect x="1232" y="365" width="3" height="1" fill="#000" /><rect x="1232" y="398" width="3" height="1" fill="#000" /><rect x="1232" y="431" width="3" height="1" fill="#000" /><rect x="1232" y="464" width="3" height="1" fill="#000" /><rect x="1232" y="497" width="3" height="1" fill="#000" /><rect x="1232" y="530" width="3" height="1" fill="#000" /><rect x="1232" y="563" width="3" height="1" fill="#000" /><rect x="1232" y="596" width="3" height="1" fill="#000" /><rect x="1232" y="629" width="3" height="1" fill="#000" /><rect x="1232" y="662" width="3" height="1" fill="#000" /><text x="1238" y="138" font-size="10" fill="#000" textLength="32" lengthAdjust="spacingAndGlyphs" stroke="#000" stroke-width="0.2">1.40285</text><text x="1238" y="171" font-size="10" fill="#000" textLength="32" lengthAdjust="spacingAndGlyphs" stroke="#000" stroke-width="0.2">1.40120</text><text x="1238" y="204" font-size="10" fill="#000" textLength="32" lengthAdjust="spacingAndGlyphs" stroke="#000" stroke-width="0.2">1.39955</text><text x="1238" y="237" font-size="10" fill="#000" textLength="32" lengthAdjust="spacingAndGlyphs" stroke="#000" stroke-width="0.2">1.39790</text><text x="1238" y="270" font-size="10" fill="#000" textLength="32" lengthAdjust="spacingAndGlyphs" stroke="#000" stroke-width="0.2">1.39625</text><text x="1238" y="303" font-size="10" fill="#000" textLength="32" lengthAdjust="spacingAndGlyphs" stroke="#000" stroke-width="0.2">1.39460</text><text x="1238" y="336" font-size="10" fill="#000" textLength="32" lengthAdjust="spacingAndGlyphs" stroke="#000" stroke-width="0.2">1.39295</text><text x="1238" y="369" font-size="10" fill="#000" textLength="32" lengthAdjust="spacingAndGlyphs" stroke="#000" stroke-width="0.2">1.39130</text><text x="1238" y="402" font-size="10" fill="#000" textLength="32" lengthAdjust="spacingAndGlyphs" stroke="#000" stroke-width="0.2">1.38970</text><text x="1238" y="435" font-size="10" fill="#000" textLength="32" lengthAdjust="spacingAndGlyphs" stroke="#000" stroke-width="0.2">1.38805</text><text x="1238" y="468" font-size="10" fill="#000" textLength="32" lengthAdjust="spacingAndGlyphs" stroke="#000" stroke-width="0.2">1.38640</text><text x="1238" y="501" font-size="10" fill="#000" textLength="32" lengthAdjust="spacingAndGlyphs" stroke="#000" stroke-width="0.2">1.38475</text><text x="1238" y="534" font-size="10" fill="#000" textLength="32" lengthAdjust="spacingAndGlyphs" stroke="#000" stroke-width="0.2">1.38310</text><text x="1238" y="567" font-size="10" fill="#000" textLength="32" lengthAdjust="spacingAndGlyphs" stroke="#000" stroke-width="0.2">1.38145</text><text x="1238" y="600" font-size="10" fill="#000" textLength="32" lengthAdjust="spacingAndGlyphs" stroke="#000" stroke-width="0.2">1.37980</text><text x="1238" y="633" font-size="10" fill="#000" textLength="32" lengthAdjust="spacingAndGlyphs" stroke="#000" stroke-width="0.2">1.37815</text><text x="1238" y="666" font-size="10" fill="#000" textLength="32" lengthAdjust="spacingAndGlyphs" stroke="#000" stroke-width="0.2">1.37650</text><rect x="1234" y="297" width="39" height="11" fill="#0000c8" /><text x="1237" y="306" font-size="10" fill="#fff" textLength="33" lengthAdjust="spacingAndGlyphs" >1.39442</text><rect x="1234" y="394" width="39" height="11" fill="#ff0000" /><text x="1237" y="403" font-size="10" fill="#fff" textLength="33" lengthAdjust="spacingAndGlyphs" >1.38956</text><rect x="1234" y="465" width="39" height="11" fill="#000000" /><text x="1237" y="474" font-size="10" fill="#fff" textLength="33" lengthAdjust="spacingAndGlyphs" >1.38603</text><rect x="1234" y="539" width="39" height="11" fill="#0000c8" /><text x="1237" y="548" font-size="10" fill="#fff" textLength="33" lengthAdjust="spacingAndGlyphs" >1.38237</text><rect x="9" y="666" width="1" height="3" fill="#000" /><text x="8" y="678" font-size="10" fill="#000" textLength="47" lengthAdjust="spacingAndGlyphs" stroke="#000" stroke-width="0.2">7 Mar 2014</text><rect x="73" y="666" width="1" height="3" fill="#000" /><text x="72" y="678" font-size="10" fill="#000" textLength="50" lengthAdjust="spacingAndGlyphs" stroke="#000" stroke-width="0.2">7 Mar 13:00</text><rect x="137" y="666" width="1" height="3" fill="#000" /><text x="136" y="678" font-size="10" fill="#000" textLength="50" lengthAdjust="spacingAndGlyphs" stroke="#000" stroke-width="0.2">7 Mar 21:00</text><rect x="201" y="666" width="1" height="3" fill="#000" /><text x="200" y="678" font-size="10" fill="#000" textLength="54" lengthAdjust="spacingAndGlyphs" stroke="#000" stroke-width="0.2">10 Mar 05:00</text><rect x="265" y="666" width="1" height="3" fill="#000" /><text x="264" y="678" font-size="10" fill="#000" textLength="54" lengthAdjust="spacingAndGlyphs" stroke="#000" stroke-width="0.2">10 Mar 13:00</text><rect x="329" y="666" width="1" height="3" fill="#000" /><text x="328" y="678" font-size="10" fill="#000" textLength="54" lengthAdjust="spacingAndGlyphs" stroke="#000" stroke-width="0.2">10 Mar 21:00</text><rect x="393" y="666" width="1" height="3" fill="#000" /><text x="392" y="678" font-size="10" fill="#000" textLength="54" lengthAdjust="spacingAndGlyphs" stroke="#000" stroke-width="0.2">11 Mar 05:00</text><rect x="457" y="666" width="1" height="3" fill="#000" /><text x="456" y="678" font-size="10" fill="#000" textLength="54" lengthAdjust="spacingAndGlyphs" stroke="#000" stroke-width="0.2">11 Mar 13:00</text><rect x="521" y="666" width="1" height="3" fill="#000" /><text x="520" y="678" font-size="10" fill="#000" textLength="54" lengthAdjust="spacingAndGlyphs" stroke="#000" stroke-width="0.2">11 Mar 21:00</text><rect x="585" y="666" width="1" height="3" fill="#000" /><text x="584" y="678" font-size="10" fill="#000" textLength="54" lengthAdjust="spacingAndGlyphs" stroke="#000" stroke-width="0.2">12 Mar 05:00</text><rect x="649" y="666" width="1" height="3" fill="#000" /><text x="648" y="678" font-size="10" fill="#000" textLength="54" lengthAdjust="spacingAndGlyphs" stroke="#000" stroke-width="0.2">12 Mar 13:00</text><rect x="713" y="666" width="1" height="3" fill="#000" /><text x="712" y="678" font-size="10" fill="#000" textLength="54" lengthAdjust="spacingAndGlyphs" stroke="#000" stroke-width="0.2">12 Mar 21:00</text><rect x="777" y="666" width="1" height="3" fill="#000" /><text x="776" y="678" font-size="10" fill="#000" textLength="54" lengthAdjust="spacingAndGlyphs" stroke="#000" stroke-width="0.2">13 Mar 05:00</text><rect x="841" y="666" width="1" height="3" fill="#000" /><text x="840" y="678" font-size="10" fill="#000" textLength="54" lengthAdjust="spacingAndGlyphs" stroke="#000" stroke-width="0.2">13 Mar 13:00</text><rect x="905" y="666" width="1" height="3" fill="#000" /><text x="904" y="678" font-size="10" fill="#000" textLength="54" lengthAdjust="spacingAndGlyphs" stroke="#000" stroke-width="0.2">13 Mar 21:00</text><rect x="969" y="666" width="1" height="3" fill="#000" /><text x="968" y="678" font-size="10" fill="#000" textLength="54" lengthAdjust="spacingAndGlyphs" stroke="#000" stroke-width="0.2">14 Mar 05:00</text><rect x="4" y="684" width="1272" height="1" fill="#000" /><rect x="4" y="685" width="1272" height="20" fill="#e1e1e1" /><rect x="4" y="705" width="1272" height="1" fill="#fff" /><path d="M8.5,685 V703.5 H88.5 V685" fill="#fff" stroke="#000"/><text x="18" y="698.5" font-size="11" fill="#000" textLength="57" lengthAdjust="spacingAndGlyphs" >EURUSD,H1</text><text x="97.5" y="698.5" font-size="11" fill="#6a6a6a" textLength="62.5" lengthAdjust="spacingAndGlyphs" >GBPUSD,M30</text><text x="182.5" y="698.5" font-size="11" fill="#6a6a6a" textLength="52.5" lengthAdjust="spacingAndGlyphs" >EURJPY,H1</text><text x="257.5" y="698.5" font-size="11" fill="#6a6a6a" textLength="62.5" lengthAdjust="spacingAndGlyphs" >GBPCHF,M30</text><text x="342.5" y="698.5" font-size="11" fill="#6a6a6a" textLength="57.5" lengthAdjust="spacingAndGlyphs" >AUDUSD,H4</text><text x="422.5" y="698.5" font-size="11" fill="#6a6a6a" textLength="56.5" lengthAdjust="spacingAndGlyphs" >NZDUSD,H4</text><text x="501.5" y="698.5" font-size="11" fill="#6a6a6a" textLength="67" lengthAdjust="spacingAndGlyphs" >XAUUSD,Daily</text><text x="590" y="698.5" font-size="11" fill="#6a6a6a" textLength="56" lengthAdjust="spacingAndGlyphs" >EURCHF,H4</text><text x="670" y="698.5" font-size="11" fill="#6a6a6a" textLength="66" lengthAdjust="spacingAndGlyphs" >EURGBP,Daily</text><text x="758.5" y="698.5" font-size="11" fill="#6a6a6a" textLength="57.5" lengthAdjust="spacingAndGlyphs" >AUDNZD,H4</text><text x="838.5" y="698.5" font-size="11" fill="#6a6a6a" textLength="52.5" lengthAdjust="spacingAndGlyphs" >GBPJPY,H4</text><text x="913.5" y="698.5" font-size="11" fill="#6a6a6a" textLength="66.5" lengthAdjust="spacingAndGlyphs" >USDCHF,Daily</text><text x="1002.5" y="698.5" font-size="11" fill="#6a6a6a" textLength="53.5" lengthAdjust="spacingAndGlyphs" >USDJPY,H4</text><text x="1078.5" y="698.5" font-size="11" fill="#6a6a6a" textLength="57.5" lengthAdjust="spacingAndGlyphs" >USDCAD,H4</text><rect x="172" y="689" width="1" height="12" fill="#777" /><rect x="248" y="689" width="1" height="12" fill="#777" /><rect x="332" y="689" width="1" height="12" fill="#777" /><rect x="412" y="689" width="1" height="12" fill="#777" /><rect x="492" y="689" width="1" height="12" fill="#777" /><rect x="580" y="689" width="1" height="12" fill="#777" /><rect x="660" y="689" width="1" height="12" fill="#777" /><rect x="748" y="689" width="1" height="12" fill="#777" /><rect x="828" y="689" width="1" height="12" fill="#777" /><rect x="903" y="689" width="1" height="12" fill="#777" /><rect x="992" y="689" width="1" height="12" fill="#777" /><rect x="1068" y="689" width="1" height="12" fill="#777" /><rect x="1148" y="689" width="1" height="12" fill="#777" /><path d="M1252,691 v7 l-4,-3.5 z M1264,691 v7 l4,-3.5 z" fill="#999"/><rect x="4" y="706" width="1272" height="21" fill="#e1e1e1" /><text x="6" y="721" font-size="12" fill="#000" textLength="129" lengthAdjust="spacingAndGlyphs" >Для справки, нажмите F1</text><rect x="555" y="708" width="1" height="18" fill="#a0a0a0" /><rect x="556" y="708" width="1" height="18" fill="#fff" /><rect x="665" y="708" width="1" height="18" fill="#a0a0a0" /><rect x="666" y="708" width="1" height="18" fill="#fff" /><rect x="766" y="708" width="1" height="18" fill="#a0a0a0" /><rect x="767" y="708" width="1" height="18" fill="#fff" /><rect x="837" y="708" width="1" height="18" fill="#a0a0a0" /><rect x="838" y="708" width="1" height="18" fill="#fff" /><rect x="908" y="708" width="1" height="18" fill="#a0a0a0" /><rect x="909" y="708" width="1" height="18" fill="#fff" /><rect x="977" y="708" width="1" height="18" fill="#a0a0a0" /><rect x="978" y="708" width="1" height="18" fill="#fff" /><rect x="1049" y="708" width="1" height="18" fill="#a0a0a0" /><rect x="1050" y="708" width="1" height="18" fill="#fff" /><rect x="1115" y="708" width="1" height="18" fill="#a0a0a0" /><rect x="1116" y="708" width="1" height="18" fill="#fff" /><text x="561" y="721" font-size="12" fill="#000" textLength="37" lengthAdjust="spacingAndGlyphs" >Default</text><rect x="1120.0" y="711" width="1.7" height="8.0" fill="#3c8c10" /><rect x="1120.0" y="719.0" width="1.7" height="3.0" fill="#c82010" /><rect x="1122.7" y="711" width="1.7" height="7.1" fill="#3c8c10" /><rect x="1122.7" y="718.1" width="1.7" height="3.9" fill="#c82010" /><rect x="1125.4" y="711" width="1.7" height="6.2" fill="#3c8c10" /><rect x="1125.4" y="717.2" width="1.7" height="4.8" fill="#c82010" /><rect x="1128.1" y="711" width="1.7" height="5.3" fill="#3c8c10" /><rect x="1128.1" y="716.3" width="1.7" height="5.7" fill="#c82010" /><rect x="1130.8" y="711" width="1.7" height="4.4" fill="#3c8c10" /><rect x="1130.8" y="715.4" width="1.7" height="6.6" fill="#c82010" /><rect x="1133.5" y="711" width="1.7" height="3.5" fill="#3c8c10" /><rect x="1133.5" y="714.5" width="1.7" height="7.5" fill="#c82010" /><rect x="1136.2" y="711" width="1.7" height="2.5999999999999996" fill="#3c8c10" /><rect x="1136.2" y="713.6" width="1.7" height="8.4" fill="#c82010" /><rect x="1138.9" y="711" width="1.7" height="1.6999999999999993" fill="#3c8c10" /><rect x="1138.9" y="712.7" width="1.7" height="9.3" fill="#c82010" /><rect x="1141.6" y="711" width="1.7" height="0.8000000000000007" fill="#3c8c10" /><rect x="1141.6" y="711.8" width="1.7" height="10.2" fill="#c82010" /><text x="1170" y="721" font-size="12" fill="#000" textLength="43" lengthAdjust="spacingAndGlyphs" >351/0 kb</text><path d="M1262,725 l12,-12 M1266,725 l8,-8 M1270,725 l4,-4" stroke="#aaa" stroke-width="1.2"/><rect x="0" y="727" width="1280" height="3" fill="#161616" /><rect x="1" y="31" width="1" height="696" fill="#4a4a4a" /><rect x="4" y="31" width="1" height="696" fill="#9a9a90" /><rect x="1275" y="31" width="1" height="696" fill="#9a9a90" /><rect x="1278" y="31" width="1" height="696" fill="#4a4a4a" /></svg></body></html>
